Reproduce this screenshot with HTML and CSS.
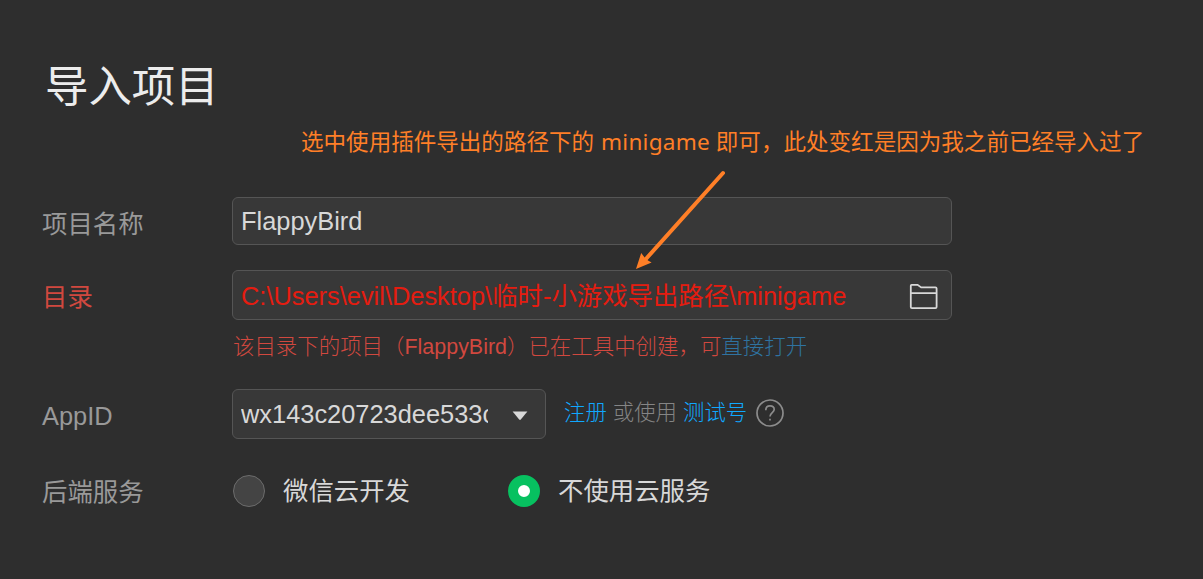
FILE: index.html
```html
<!DOCTYPE html>
<html lang="zh-CN">
<head>
<meta charset="utf-8">
<title>导入项目</title>
<link rel="stylesheet" href="styles.css">
</head>
<body>
<main class="page">
  <h1 class="title">导入项目</h1>
  <form class="form">
    <div class="row row-name">
      <span class="label">项目名称</span>
      <div class="field"><span class="value">FlappyBird</span></div>
    </div>
    <div class="row row-dir">
      <span class="label label-error">目录</span>
      <div class="field">
        <span class="value value-error">C:\Users\evil\Desktop\临时-小游戏导出路径\minigame</span>
        <svg class="folder" width="30" height="28" viewBox="0 0 30 28"><path d="M2.6 1.8H8.6L12.2 4.4H26.4Q27.6 4.4 27.6 5.6V24Q27.6 25.2 26.4 25.2H3Q1.8 25.2 1.8 24V2.8Q1.8 1.8 2.6 1.8ZM2 10.1H27.4"/></svg>
      </div>
    </div>
    <p class="error">该目录下的项目（<span class="error-name">FlappyBird</span>）已在工具中创建，可<a class="open-link">直接打开</a></p>
    <div class="row row-appid">
      <span class="label">AppID</span>
      <div class="field select">
        <span class="value clipped">wx143c20723dee533c</span>
        <svg class="caret" width="16" height="10" viewBox="0 0 16 10"><path d="M.6 .5H15.4L8.8 8.5Q8 9.4 7.2 8.5Z"/></svg>
      </div>
      <div class="hint"><a class="link">注册</a><span>或使用</span><a class="link">测试号</a></div>
      <svg class="help" width="28" height="28" viewBox="0 0 28 28"><circle cx="14" cy="14" r="13"/><path d="M9.8 11.2C9.8 8.5 11.5 6.9 14 6.9C16.5 6.9 18.2 8.4 18.2 10.6C18.2 13.6 14 13.8 14 17.5"/><path d="M14 19.7V21.5"/></svg>
    </div>
    <div class="row row-service">
      <span class="label">后端服务</span>
      <label class="option option-cloud"><span class="radio"></span>微信云开发</label>
      <label class="option"><span class="radio checked"></span>不使用云服务</label>
    </div>
  </form>
  <p class="note">选中使用插件导出的路径下的 <span class="note-latin">minigame</span> 即可，此处变红是因为我之前已经导入过了</p>
  <svg class="arrow" width="96" height="106" viewBox="0 0 96 106"><path class="shaft" d="M92 6L14 93"/><path class="head" d="M5 102L10.2 86L13.6 90.4L17 93.6L20.6 95.6Z"/></svg>
</main>
</body>
</html>
```
FILE: styles.css
```css
* { box-sizing: border-box; }

body {
  margin: 0;
  background: #2e2e2e;
  color: #d8d8d8;
  font-family: "Liberation Sans", "Noto Sans CJK SC", sans-serif;
  font-size: 25.4px;
}

.page {
  position: relative;
  height: 579px;
  padding: 56px 0 0 42px;
  overflow: hidden;
}

.title {
  height: 62px;
  margin: 0 0 79px 3px;
  color: #ececec;
  font-size: 43.4px;
  font-weight: 400;
  line-height: 62px;
}

.form { margin: 0; }

.row { display: flex; align-items: center; }
.row-name { height: 48px; margin-bottom: 25px; }
.row-dir { height: 50px; }
.row-appid { height: 50px; margin-bottom: 26px; }
.row-service { height: 52px; }

.label {
  flex: none;
  width: 190px;
  padding-top: 5px;
  color: #999;
  line-height: 38px;
}
.row-name .label { padding-top: 6px; }
.row-appid .label { padding-top: 3px; }
.label-error { padding-top: 3px; color: #d1483f; }
.row-service .label { padding-top: 1px; }

.field {
  display: flex;
  align-items: center;
  justify-content: space-between;
  width: 720px;
  height: 100%;
  padding: 0 12px 0 8px;
  border: 1px solid #555;
  border-radius: 6px;
  background: #383838;
}
.value { line-height: 38px; white-space: nowrap; }
.value-error { color: #e51c10; padding-top: 2px; }
.folder { margin-top: 4px; fill: none; stroke: #d8d8d8; stroke-width: 1.8; }

.error {
  height: 30px;
  margin: 12px 0 27px 191px;
  color: #d1483f;
  font-size: 21.45px;
  font-weight: 300;
  line-height: 30px;
  white-space: nowrap;
}
.error-name { font-weight: 400; }
.open-link { color: #2f73a1; }

.select { flex: none; width: 314px; padding: 0 17px 0 8px; }
.clipped { width: 247px; overflow: hidden; }
.caret { margin-top: 3px; fill: #d8d8d8; }

.hint {
  display: flex;
  gap: 6px;
  margin: -3px 9px 0 18px;
  color: #858585;
  font-size: 21.4px;
  font-weight: 300;
  line-height: 30px;
}
.link { color: #10a8ff; }
.help { margin-top: -2px; fill: none; stroke: #8c8c8c; stroke-width: 1.7; }

.option { display: flex; align-items: center; gap: 18px; line-height: 38px; }
.option-cloud { width: 275px; }
.radio {
  width: 32px;
  height: 32px;
  margin-left: 1px;
  border: 1px solid #6c6c6c;
  border-radius: 50%;
  background: #444;
}
.checked { border: 10px solid #07c160; background: #fff; }

.note {
  position: absolute;
  left: 301px;
  top: 125px;
  margin: 0;
  color: #ff7f27;
  font-family: "Noto Sans", "Noto Sans CJK SC", sans-serif;
  font-size: 22.55px;
  line-height: 34px;
  white-space: nowrap;
}
.note-latin { margin-left: 1px; letter-spacing: .25px; }

.arrow { position: absolute; left: 631px; top: 167px; }
.shaft { stroke: #ff7f27; stroke-width: 4; stroke-linecap: round; }
.head { fill: #ff7f27; }
```
